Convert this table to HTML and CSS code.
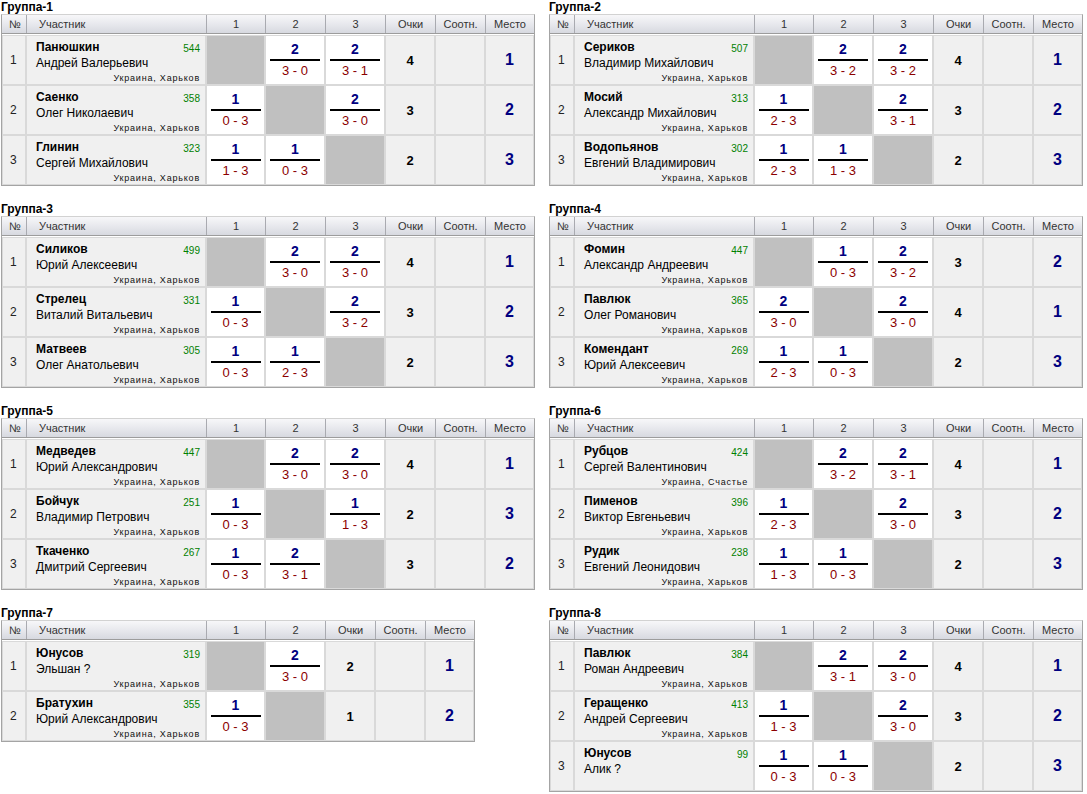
FILE: index.html
```html
<!DOCTYPE html>
<html lang="ru">
<head>
<meta charset="utf-8">
<title>Группы</title>
<link rel="stylesheet" href="styles.css">
</head>
<body>
<div class="page">

<!-- Группа-1 -->
<section class="group">
  <div class="title">Группа-1</div>
  <div class="tbl g3">
    <div class="hdr"><div class="h num">№</div><div class="h name">Участник</div><div class="h">1</div><div class="h">2</div><div class="h">3</div><div class="h">Очки</div><div class="h">Соотн.</div><div class="h">Место</div></div>
    <div class="row"><div class="c num">1</div><div class="c part"><div class="top"><b>Панюшкин</b><span class="rt">544</span></div><div class="fn">Андрей Валерьевич</div><div class="ct">Украина, Харьков</div></div><div class="c self"></div><div class="c sc"><span class="w">2</span><span class="s">3 - 0</span></div><div class="c sc"><span class="w">2</span><span class="s">3 - 1</span></div><div class="c pts">4</div><div class="c rat"></div><div class="c pl">1</div></div>
    <div class="row"><div class="c num">2</div><div class="c part"><div class="top"><b>Саенко</b><span class="rt">358</span></div><div class="fn">Олег Николаевич</div><div class="ct">Украина, Харьков</div></div><div class="c sc"><span class="w">1</span><span class="s">0 - 3</span></div><div class="c self"></div><div class="c sc"><span class="w">2</span><span class="s">3 - 0</span></div><div class="c pts">3</div><div class="c rat"></div><div class="c pl">2</div></div>
    <div class="row"><div class="c num">3</div><div class="c part"><div class="top"><b>Глинин</b><span class="rt">323</span></div><div class="fn">Сергей Михайлович</div><div class="ct">Украина, Харьков</div></div><div class="c sc"><span class="w">1</span><span class="s">1 - 3</span></div><div class="c sc"><span class="w">1</span><span class="s">0 - 3</span></div><div class="c self"></div><div class="c pts">2</div><div class="c rat"></div><div class="c pl">3</div></div>
  </div>
</section>

<!-- Группа-2 -->
<section class="group">
  <div class="title">Группа-2</div>
  <div class="tbl g3">
    <div class="hdr"><div class="h num">№</div><div class="h name">Участник</div><div class="h">1</div><div class="h">2</div><div class="h">3</div><div class="h">Очки</div><div class="h">Соотн.</div><div class="h">Место</div></div>
    <div class="row"><div class="c num">1</div><div class="c part"><div class="top"><b>Сериков</b><span class="rt">507</span></div><div class="fn">Владимир Михайлович</div><div class="ct">Украина, Харьков</div></div><div class="c self"></div><div class="c sc"><span class="w">2</span><span class="s">3 - 2</span></div><div class="c sc"><span class="w">2</span><span class="s">3 - 2</span></div><div class="c pts">4</div><div class="c rat"></div><div class="c pl">1</div></div>
    <div class="row"><div class="c num">2</div><div class="c part"><div class="top"><b>Мосий</b><span class="rt">313</span></div><div class="fn">Александр Михайлович</div><div class="ct">Украина, Харьков</div></div><div class="c sc"><span class="w">1</span><span class="s">2 - 3</span></div><div class="c self"></div><div class="c sc"><span class="w">2</span><span class="s">3 - 1</span></div><div class="c pts">3</div><div class="c rat"></div><div class="c pl">2</div></div>
    <div class="row"><div class="c num">3</div><div class="c part"><div class="top"><b>Водопьянов</b><span class="rt">302</span></div><div class="fn">Евгений Владимирович</div><div class="ct">Украина, Харьков</div></div><div class="c sc"><span class="w">1</span><span class="s">2 - 3</span></div><div class="c sc"><span class="w">1</span><span class="s">1 - 3</span></div><div class="c self"></div><div class="c pts">2</div><div class="c rat"></div><div class="c pl">3</div></div>
  </div>
</section>

<!-- Группа-3 -->
<section class="group">
  <div class="title">Группа-3</div>
  <div class="tbl g3">
    <div class="hdr"><div class="h num">№</div><div class="h name">Участник</div><div class="h">1</div><div class="h">2</div><div class="h">3</div><div class="h">Очки</div><div class="h">Соотн.</div><div class="h">Место</div></div>
    <div class="row"><div class="c num">1</div><div class="c part"><div class="top"><b>Силиков</b><span class="rt">499</span></div><div class="fn">Юрий Алексеевич</div><div class="ct">Украина, Харьков</div></div><div class="c self"></div><div class="c sc"><span class="w">2</span><span class="s">3 - 0</span></div><div class="c sc"><span class="w">2</span><span class="s">3 - 0</span></div><div class="c pts">4</div><div class="c rat"></div><div class="c pl">1</div></div>
    <div class="row"><div class="c num">2</div><div class="c part"><div class="top"><b>Стрелец</b><span class="rt">331</span></div><div class="fn">Виталий Витальевич</div><div class="ct">Украина, Харьков</div></div><div class="c sc"><span class="w">1</span><span class="s">0 - 3</span></div><div class="c self"></div><div class="c sc"><span class="w">2</span><span class="s">3 - 2</span></div><div class="c pts">3</div><div class="c rat"></div><div class="c pl">2</div></div>
    <div class="row"><div class="c num">3</div><div class="c part"><div class="top"><b>Матвеев</b><span class="rt">305</span></div><div class="fn">Олег Анатольевич</div><div class="ct">Украина, Харьков</div></div><div class="c sc"><span class="w">1</span><span class="s">0 - 3</span></div><div class="c sc"><span class="w">1</span><span class="s">2 - 3</span></div><div class="c self"></div><div class="c pts">2</div><div class="c rat"></div><div class="c pl">3</div></div>
  </div>
</section>

<!-- Группа-4 -->
<section class="group">
  <div class="title">Группа-4</div>
  <div class="tbl g3">
    <div class="hdr"><div class="h num">№</div><div class="h name">Участник</div><div class="h">1</div><div class="h">2</div><div class="h">3</div><div class="h">Очки</div><div class="h">Соотн.</div><div class="h">Место</div></div>
    <div class="row"><div class="c num">1</div><div class="c part"><div class="top"><b>Фомин</b><span class="rt">447</span></div><div class="fn">Александр Андреевич</div><div class="ct">Украина, Харьков</div></div><div class="c self"></div><div class="c sc"><span class="w">1</span><span class="s">0 - 3</span></div><div class="c sc"><span class="w">2</span><span class="s">3 - 2</span></div><div class="c pts">3</div><div class="c rat"></div><div class="c pl">2</div></div>
    <div class="row"><div class="c num">2</div><div class="c part"><div class="top"><b>Павлюк</b><span class="rt">365</span></div><div class="fn">Олег Романович</div><div class="ct">Украина, Харьков</div></div><div class="c sc"><span class="w">2</span><span class="s">3 - 0</span></div><div class="c self"></div><div class="c sc"><span class="w">2</span><span class="s">3 - 0</span></div><div class="c pts">4</div><div class="c rat"></div><div class="c pl">1</div></div>
    <div class="row"><div class="c num">3</div><div class="c part"><div class="top"><b>Комендант</b><span class="rt">269</span></div><div class="fn">Юрий Алексеевич</div><div class="ct">Украина, Харьков</div></div><div class="c sc"><span class="w">1</span><span class="s">2 - 3</span></div><div class="c sc"><span class="w">1</span><span class="s">0 - 3</span></div><div class="c self"></div><div class="c pts">2</div><div class="c rat"></div><div class="c pl">3</div></div>
  </div>
</section>

<!-- Группа-5 -->
<section class="group">
  <div class="title">Группа-5</div>
  <div class="tbl g3">
    <div class="hdr"><div class="h num">№</div><div class="h name">Участник</div><div class="h">1</div><div class="h">2</div><div class="h">3</div><div class="h">Очки</div><div class="h">Соотн.</div><div class="h">Место</div></div>
    <div class="row"><div class="c num">1</div><div class="c part"><div class="top"><b>Медведев</b><span class="rt">447</span></div><div class="fn">Юрий Александрович</div><div class="ct">Украина, Харьков</div></div><div class="c self"></div><div class="c sc"><span class="w">2</span><span class="s">3 - 0</span></div><div class="c sc"><span class="w">2</span><span class="s">3 - 0</span></div><div class="c pts">4</div><div class="c rat"></div><div class="c pl">1</div></div>
    <div class="row"><div class="c num">2</div><div class="c part"><div class="top"><b>Бойчук</b><span class="rt">251</span></div><div class="fn">Владимир Петрович</div><div class="ct">Украина, Харьков</div></div><div class="c sc"><span class="w">1</span><span class="s">0 - 3</span></div><div class="c self"></div><div class="c sc"><span class="w">1</span><span class="s">1 - 3</span></div><div class="c pts">2</div><div class="c rat"></div><div class="c pl">3</div></div>
    <div class="row"><div class="c num">3</div><div class="c part"><div class="top"><b>Ткаченко</b><span class="rt">267</span></div><div class="fn">Дмитрий Сергеевич</div><div class="ct">Украина, Харьков</div></div><div class="c sc"><span class="w">1</span><span class="s">0 - 3</span></div><div class="c sc"><span class="w">2</span><span class="s">3 - 1</span></div><div class="c self"></div><div class="c pts">3</div><div class="c rat"></div><div class="c pl">2</div></div>
  </div>
</section>

<!-- Группа-6 -->
<section class="group">
  <div class="title">Группа-6</div>
  <div class="tbl g3">
    <div class="hdr"><div class="h num">№</div><div class="h name">Участник</div><div class="h">1</div><div class="h">2</div><div class="h">3</div><div class="h">Очки</div><div class="h">Соотн.</div><div class="h">Место</div></div>
    <div class="row"><div class="c num">1</div><div class="c part"><div class="top"><b>Рубцов</b><span class="rt">424</span></div><div class="fn">Сергей Валентинович</div><div class="ct">Украина, Счастье</div></div><div class="c self"></div><div class="c sc"><span class="w">2</span><span class="s">3 - 2</span></div><div class="c sc"><span class="w">2</span><span class="s">3 - 1</span></div><div class="c pts">4</div><div class="c rat"></div><div class="c pl">1</div></div>
    <div class="row"><div class="c num">2</div><div class="c part"><div class="top"><b>Пименов</b><span class="rt">396</span></div><div class="fn">Виктор Евгеньевич</div><div class="ct">Украина, Харьков</div></div><div class="c sc"><span class="w">1</span><span class="s">2 - 3</span></div><div class="c self"></div><div class="c sc"><span class="w">2</span><span class="s">3 - 0</span></div><div class="c pts">3</div><div class="c rat"></div><div class="c pl">2</div></div>
    <div class="row"><div class="c num">3</div><div class="c part"><div class="top"><b>Рудик</b><span class="rt">238</span></div><div class="fn">Евгений Леонидович</div><div class="ct">Украина, Харьков</div></div><div class="c sc"><span class="w">1</span><span class="s">1 - 3</span></div><div class="c sc"><span class="w">1</span><span class="s">0 - 3</span></div><div class="c self"></div><div class="c pts">2</div><div class="c rat"></div><div class="c pl">3</div></div>
  </div>
</section>

<!-- Группа-7 -->
<section class="group">
  <div class="title">Группа-7</div>
  <div class="tbl g2">
    <div class="hdr"><div class="h num">№</div><div class="h name">Участник</div><div class="h">1</div><div class="h">2</div><div class="h">Очки</div><div class="h">Соотн.</div><div class="h">Место</div></div>
    <div class="row"><div class="c num">1</div><div class="c part"><div class="top"><b>Юнусов</b><span class="rt">319</span></div><div class="fn">Эльшан ?</div><div class="ct">Украина, Харьков</div></div><div class="c self"></div><div class="c sc"><span class="w">2</span><span class="s">3 - 0</span></div><div class="c pts">2</div><div class="c rat"></div><div class="c pl">1</div></div>
    <div class="row"><div class="c num">2</div><div class="c part"><div class="top"><b>Братухин</b><span class="rt">355</span></div><div class="fn">Юрий Александрович</div><div class="ct">Украина, Харьков</div></div><div class="c sc"><span class="w">1</span><span class="s">0 - 3</span></div><div class="c self"></div><div class="c pts">1</div><div class="c rat"></div><div class="c pl">2</div></div>
  </div>
</section>

<!-- Группа-8 -->
<section class="group">
  <div class="title">Группа-8</div>
  <div class="tbl g3">
    <div class="hdr"><div class="h num">№</div><div class="h name">Участник</div><div class="h">1</div><div class="h">2</div><div class="h">3</div><div class="h">Очки</div><div class="h">Соотн.</div><div class="h">Место</div></div>
    <div class="row"><div class="c num">1</div><div class="c part"><div class="top"><b>Павлюк</b><span class="rt">384</span></div><div class="fn">Роман Андреевич</div><div class="ct">Украина, Харьков</div></div><div class="c self"></div><div class="c sc"><span class="w">2</span><span class="s">3 - 1</span></div><div class="c sc"><span class="w">2</span><span class="s">3 - 0</span></div><div class="c pts">4</div><div class="c rat"></div><div class="c pl">1</div></div>
    <div class="row"><div class="c num">2</div><div class="c part"><div class="top"><b>Геращенко</b><span class="rt">413</span></div><div class="fn">Андрей Сергеевич</div><div class="ct">Украина, Харьков</div></div><div class="c sc"><span class="w">1</span><span class="s">1 - 3</span></div><div class="c self"></div><div class="c sc"><span class="w">2</span><span class="s">3 - 0</span></div><div class="c pts">3</div><div class="c rat"></div><div class="c pl">2</div></div>
    <div class="row"><div class="c num">3</div><div class="c part"><div class="top"><b>Юнусов</b><span class="rt">99</span></div><div class="fn">Алик ?</div><div class="ct"></div></div><div class="c sc"><span class="w">1</span><span class="s">0 - 3</span></div><div class="c sc"><span class="w">1</span><span class="s">0 - 3</span></div><div class="c self"></div><div class="c pts">2</div><div class="c rat"></div><div class="c pl">3</div></div>
  </div>
</section>

</div>
</body>
</html>
```

FILE: styles.css
```css
* { box-sizing: border-box; }

body {
  margin: 0;
  background: #fff;
  color: #000;
  font-family: "Liberation Sans", Arial, sans-serif;
}

.page {
  display: grid;
  grid-template-columns: 534px 534px;
  column-gap: 14px;
  row-gap: 16px;
  align-items: start;
  padding-left: 1px;
}

.title {
  font-size: 12px;
  font-weight: bold;
  line-height: 14px;
  height: 14px;
}

.tbl {
  border: 1px solid #a4a4a4;
  border-top-color: #d2d2d2;
  background: #fff;
}

.tbl.g3 { width: 534px; }
.tbl.g2 { width: 474px; }

.g3 .hdr, .g3 .row { grid-template-columns: 24px 180px 59px 60px 60px 50px 50px 49px; }
.g2 .hdr, .g2 .row { grid-template-columns: 24px 180px 59px 60px 50px 50px 49px; }

.hdr {
  display: grid;
  height: 19px;
  border-bottom: 1px solid #9c9c9c;
  margin-bottom: 1px;
  background: linear-gradient(#f7f7f9, #e6e7ec 55%, #d7d9e0);
}

.h {
  font-size: 11px;
  line-height: 18px;
  color: #333;
  text-align: center;
  border-left: 1px solid #a9aab0;
  white-space: nowrap;
}

.h.num {
  border-left: 0;
  text-align: left;
  padding-left: 7px;
}

.h.name {
  text-align: left;
  padding-left: 12px;
}

.row {
  display: grid;
  height: 50px;
}

.c {
  border: 1px solid #d9d9d9;
  background: #f0f0f0;
  display: flex;
  align-items: center;
  justify-content: center;
}

.c.num {
  justify-content: flex-start;
  padding-left: 7px;
  font-size: 12px;
  color: #222;
}

.c.part {
  flex-direction: column;
  align-items: stretch;
  justify-content: flex-start;
  padding: 4px 5px 0 9px;
}

.top {
  display: flex;
  justify-content: space-between;
  align-items: flex-start;
  font-size: 12px;
  line-height: 14px;
}

.top b { font-weight: bold; }

.rt {
  font-size: 10px;
  line-height: 14px;
  padding-top: 2px;
  color: #008000;
}

.fn {
  font-size: 12px;
  line-height: 14px;
}

.ct {
  margin-top: auto;
  text-align: right;
  font-size: 9px;
  line-height: 12px;
  letter-spacing: 0.8px;
  color: #111;
}

.c.self { background: #c0c0c0; }

.c.sc {
  background: #fff;
  flex-direction: column;
}

.w {
  width: 50px;
  text-align: center;
  font-size: 14px;
  font-weight: bold;
  line-height: 15px;
  color: #000080;
  border-bottom: 2px solid #000;
  padding-bottom: 2px;
}

.s {
  font-size: 13px;
  line-height: 15px;
  margin-top: 2px;
  color: #8b0000;
}

.c.pts {
  font-size: 13px;
  font-weight: bold;
}

.c.pl {
  font-size: 16px;
  font-weight: bold;
  color: #000080;
}
```
